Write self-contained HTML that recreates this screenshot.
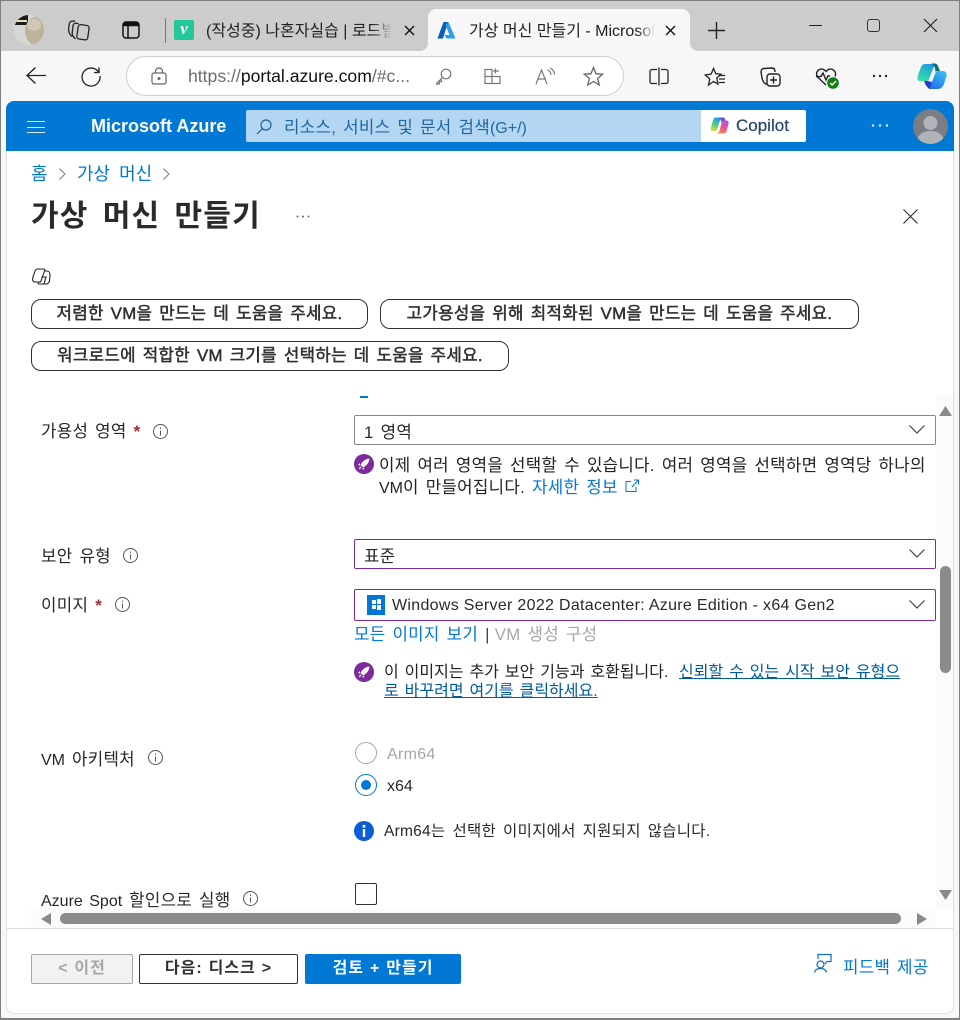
<!DOCTYPE html>
<html lang="ko"><head><meta charset="utf-8"><style>
*{box-sizing:border-box}
html,body{margin:0;padding:0;width:960px;height:1020px;overflow:hidden;background:#f7f7f7}
body{position:relative;font-family:"Liberation Sans","Noto Sans CJK KR",sans-serif;color:#292827;font-size:16px}
.a{position:absolute}
.t{position:absolute;white-space:nowrap;line-height:20px;font-size:16px}
.k{font-size:16.800px;letter-spacing:.3px;word-spacing:2px}
.n{letter-spacing:0;word-spacing:1.500px}
.l0{letter-spacing:0;font-size:16px}
.lnk{color:#0078d4}
.sel{position:absolute;left:354px;width:582px;border:1px solid #8a8886;border-radius:2px;background:#fff}
.pur{border-color:#7e2a9e}
.pill{position:absolute;height:30px;border:1px solid #323130;border-radius:10px;background:#fff;font-size:16.800px;line-height:27px;color:#323130;white-space:nowrap;text-align:center;letter-spacing:.3px;word-spacing:2px;-webkit-text-stroke:.5px #323130}
.btn{position:absolute;top:954px;height:30px;border-radius:2px;text-align:center;font-weight:700;font-size:16px;line-height:27px;white-space:nowrap;letter-spacing:1px;word-spacing:.5px}
svg{position:absolute;overflow:visible}
</style></head><body>
<div class="a" style="left:0;top:0;width:960px;height:51px;background:#cccccc"></div>
<div class="a" style="left:428px;top:9px;width:262px;height:42px;background:#f7f7f7;border-radius:8px 8px 0 0"></div>
<div class="a" style="left:420px;top:43px;width:8px;height:8px;background:#f7f7f7"></div>
<div class="a" style="left:420px;top:43px;width:8px;height:8px;background:#cccccc;border-radius:0 0 8px 0"></div>
<div class="a" style="left:690px;top:43px;width:8px;height:8px;background:#f7f7f7"></div>
<div class="a" style="left:690px;top:43px;width:8px;height:8px;background:#cccccc;border-radius:0 0 0 8px"></div>
<div class="a" style="left:6px;top:101px;width:948px;height:913px;background:#fff;border-radius:8px;border:1px solid #e1e1e1;border-top:0"></div>

<!-- avatar -->
<svg style="left:14px;top:15px" width="30" height="30" viewBox="0 0 30 30"><defs><clipPath id="c"><circle cx="15" cy="15" r="15"/></clipPath></defs><g clip-path="url(#c)"><rect width="30" height="30" fill="#d6d6d4"/><rect width="14" height="10" fill="#1a1a1a"/><rect y="5" width="13" height="2" fill="#e9e3b5"/><ellipse cx="22" cy="16" rx="11" ry="14" fill="#bdb29b"/><ellipse cx="20" cy="10" rx="7" ry="6" fill="#cfc8b4"/></g></svg>
<!-- workspaces -->
<svg style="left:68px;top:20px" width="22" height="22" fill="none" stroke="#222" stroke-width="1.300"><rect x="9.500" y="5" width="11" height="14.500" rx="2.500" transform="rotate(8 15 12)"/><path d="M10.500 3.800L8.500 3.300C6.500 3 5.300 4 5 6L4.200 12.500C4 15 5 17 7.500 18.800"/><path d="M7 1.300L5 1C3 1 1.700 2 1.200 4L.6 9C.5 12 2 15 4.200 16.500"/></svg>
<!-- tab panel -->
<svg style="left:122px;top:21px" width="18" height="18" fill="none" stroke="#111" stroke-width="1.500"><rect x="1" y="1" width="16" height="16" rx="3"/><path d="M1.500 4.500H16.500M6 5V16.500"/><rect x="1.500" y="1.500" width="15" height="3" fill="#111" stroke="none"/></svg>
<div class="a" style="left:165px;top:18px;width:1px;height:25px;background:#777"></div>
<!-- tab 1 -->
<div class="a" style="left:174px;top:20px;width:20px;height:20px;background:#20c997;border-radius:2px;color:#fff;font:italic 700 17px/18px 'Liberation Serif',serif;text-align:center">v</div>
<div class="t" style="left:206px;top:22px;width:186px;overflow:hidden;color:#222">(작성중) 나혼자실습 | 로드빌</div>
<div class="a" style="left:372px;top:18px;width:20px;height:24px;background:linear-gradient(90deg,rgba(204,204,204,0),#cccccc)"></div>
<svg style="left:404px;top:25px" width="11" height="11" stroke="#111" stroke-width="1.400"><path d="M1 1L10 10M10 1L1 10"/></svg>
<!-- tab 2 -->
<svg style="left:437px;top:21px" width="19" height="19" viewBox="0 0 19 19"><path d="M6.500 1H11L6 17.500H0.500Z" fill="#0a5fb4"/><path d="M11.500 1L18.500 17.500H9.500L7.500 14H12.500L8.500 4Z" fill="#2aa0ec"/></svg>
<div class="t" style="left:469px;top:22px;width:186px;overflow:hidden;color:#222">가상 머신 만들기 - Microsof</div>
<div class="a" style="left:637px;top:18px;width:18px;height:24px;background:linear-gradient(90deg,rgba(247,247,247,0),#f7f7f7)"></div>
<svg style="left:665px;top:25px" width="11" height="11" stroke="#111" stroke-width="1.400"><path d="M1 1L10 10M10 1L1 10"/></svg>
<svg style="left:708px;top:22px" width="17" height="17" stroke="#222" stroke-width="1.400"><path d="M0 8.500H17M8.500 0V17"/></svg>
<!-- window controls -->
<div class="a" style="left:809px;top:25px;width:13px;height:1px;background:#222"></div>
<div class="a" style="left:867px;top:19px;width:13px;height:13px;border:1.300px solid #333;border-radius:3px"></div>
<svg style="left:924px;top:19px" width="13" height="13" stroke="#222" stroke-width="1.200"><path d="M0 0L13 13M13 0L0 13"/></svg>

<!-- toolbar -->
<svg style="left:26px;top:66px" width="21" height="19" fill="none" stroke="#222" stroke-width="1.300"><path d="M20 9.500H1M9.500 1.500L1 9.500L9.500 17.500"/></svg>
<svg style="left:81px;top:65px" width="21" height="21" fill="none" stroke="#222" stroke-width="1.300"><path d="M18 2.500V7.500H13"/><path d="M17.500 7A9 9 0 1 0 19 11"/></svg>
<div class="a" style="left:126px;top:56px;width:498px;height:40px;background:#fff;border:1px solid #cfcfcf;border-radius:20px"></div>
<svg style="left:151px;top:67px" width="16" height="18" fill="none" stroke="#666" stroke-width="1.200"><rect x="1" y="6" width="14" height="11" rx="2"/><path d="M4.500 6V4.500a3.500 3.500 0 0 1 7 0V6"/><circle cx="8" cy="11.500" r=".9" fill="#666"/></svg>
<div class="t" style="left:188px;top:66px;font-size:17.600px;color:#6e6e6e;width:228px;overflow:hidden">https://<span style="color:#111">portal.azure.com</span>/#c...</div>
<svg style="left:435px;top:68px" width="17" height="17" fill="none" stroke="#777" stroke-width="1.200"><circle cx="11" cy="6" r="4.800"/><path d="M7.500 9.500L1.500 15.500V16H4.500V13.500H6.500V11.500"/></svg>
<svg style="left:484px;top:67px" width="19" height="19" fill="none" stroke="#777" stroke-width="1.200"><path d="M1 2.500H8V16.500H1ZM1 9.500H16V16.500H8M11.500 1.500V6.500M9 4H15"/></svg>
<svg style="left:535px;top:67px" width="20" height="18" fill="none" stroke="#777" stroke-width="1.200"><path d="M1 17L6.500 3L12 17M3 12H10M12.500 3C15 4 16 6 16 8M15 1C18 2.500 19.500 5 19.500 7.500"/></svg>
<svg style="left:583px;top:66px" width="21" height="20" fill="none" stroke="#666" stroke-width="1.300"><path d="M10.500 1.500L13 7.700L19.700 8.200L14.600 12.500L16.200 19L10.500 15.500L4.800 19L6.400 12.500L1.300 8.200L8 7.700Z"/></svg>
<svg style="left:649px;top:67px" width="20" height="19" fill="none" stroke="#222" stroke-width="1.300"><path d="M8 2.500H3a2 2 0 0 0-2 2v10a2 2 0 0 0 2 2h5M10 .5V18.500M12 2.500h5a2 2 0 0 1 2 2v10a2 2 0 0 1-2 2h-5"/></svg>
<svg style="left:704px;top:67px" width="22" height="20" fill="none" stroke="#222" stroke-width="1.300"><path d="M9.500 1.500L11.800 6.700L17 7.200L12.800 11L14 17L9.500 14.500L4.500 18L5.800 12L1.300 8L7.200 7Z"/><path d="M15 8.500H21M15 12H21M15 15.500H21"/></svg>
<svg style="left:760px;top:67px" width="21" height="21" fill="none" stroke="#222" stroke-width="1.400"><rect x="7" y="7" width="13" height="12" rx="3"/><path d="M13.500 9.500V16.500M10 13H17"/><path d="M15 5C15 2.500 14 1 12 1L4 1.500C2 1.500 1 3 1 5L2 11C2.500 14 4 16 6.500 17.500"/></svg>
<svg style="left:815px;top:67px" width="24" height="22" fill="none" stroke="#222" stroke-width="1.400"><path d="M11 18L3 10.500a5 5 0 0 1 0-7a5 5 0 0 1 7 0l1 1l1-1a5 5 0 0 1 7 0a5 5 0 0 1 1 6"/><path d="M1 9.500H6L8 6L11 13L13 9H15"/></svg>
<svg style="left:827px;top:77px" width="12" height="12"><circle cx="6" cy="6" r="5.800" fill="#107c10"/><path d="M3 6L5.200 8L9 4" stroke="#fff" stroke-width="1.400" fill="none"/></svg>
<svg style="left:872px;top:74px" width="16" height="4" fill="#222"><circle cx="2" cy="2" r="1.200"/><circle cx="8" cy="2" r="1.200"/><circle cx="14" cy="2" r="1.200"/></svg>
<svg style="left:917px;top:62px" width="30" height="28" viewBox="0 0 30 28"><defs><linearGradient id="g1" x1=".7" y1="0" x2=".2" y2="1"><stop offset="0" stop-color="#1b9de2"/><stop offset="1" stop-color="#3be0a0"/></linearGradient><linearGradient id="g2" x1=".8" y1="0" x2=".2" y2="1"><stop offset="0" stop-color="#3bc0f5"/><stop offset="1" stop-color="#1f6fe8"/></linearGradient></defs><path d="M8 2H18L12 17Q11.500 19 9 19H3C0 19 0 16 1 13L4 5Q5 2 8 2Z" fill="url(#g1)"/><path d="M21 9H26Q30 9 29.500 14L27 22Q25 27 21 27H12L15 20L18 12Q19 9 21 9Z" fill="url(#g2)"/><path d="M14 1.500H18Q20 1.500 21 4L23 9H20Q19 9 18.500 10L18 6Q17 3 14 1.500Z" fill="#106a84"/><path d="M7 19H11L15 20L12.500 27Q9 25 7 19Z" fill="#2340c8"/></svg>

<!-- azure header -->
<div class="a" style="left:6px;top:101px;width:948px;height:50px;background:#0078d4;border-radius:8px 8px 0 0"></div>
<div class="a" style="left:27px;top:121px;width:18px;height:12px;border-top:1.400px solid #d8eaf7;border-bottom:1.400px solid #d8eaf7"></div>
<div class="a" style="left:27px;top:126.500px;width:18px;height:1.400px;background:#d8eaf7"></div>
<div class="t" style="left:91px;top:116px;font-size:18px;font-weight:700;color:#fff">Microsoft Azure</div>
<div class="a" style="left:246px;top:110px;width:456px;height:32px;background:#b3d6f2;border-radius:2px 0 0 2px"></div>
<svg style="left:256px;top:119px" width="16" height="16" fill="none" stroke="#1e5f96" stroke-width="1.200"><circle cx="10" cy="6" r="5"/><path d="M6.500 9.500L1 15"/></svg>
<div class="t k" style="left:284px;top:118px;color:#1f66a3">리소스, 서비스 및 문서 검색<span class="l0">(G+/)</span></div>
<div class="a" style="left:701px;top:110px;width:105px;height:32px;background:#fff;border-radius:0 2px 2px 0"></div>
<svg style="left:710px;top:117px" width="19" height="17" viewBox="0 0 19 17"><defs><linearGradient id="g3" x1=".6" y1="0" x2=".3" y2="1"><stop offset="0" stop-color="#1f9ce8"/><stop offset=".6" stop-color="#5fd07a"/><stop offset="1" stop-color="#e8d840"/></linearGradient><linearGradient id="g4" x1=".8" y1="0" x2=".2" y2="1"><stop offset="0" stop-color="#a05cf0"/><stop offset=".5" stop-color="#ee4f9c"/><stop offset="1" stop-color="#f8a030"/></linearGradient></defs><path d="M5 .5H11L7 12.500Q6.500 14 5 14H2Q0 14 .8 11L3 3.500Q4 .5 5 .5Z" fill="url(#g3)"/><path d="M13.500 3.500H16.500Q19 3.500 18.500 7L16.500 14Q16 16.500 13 16.500H6.500Q8.500 16 9.500 13.500L11.500 6Q12 3.500 13.500 3.500Z" fill="url(#g4)"/><path d="M10 .5H13Q15 .5 15.500 3.500H13.500Q12 3.500 11.500 6Z" fill="#6a4fd8"/></svg>
<div class="t" style="left:736px;top:116px;font-size:17px;color:#26456a;-webkit-text-stroke:.2px #26456a">Copilot</div>
<svg style="left:871px;top:124px" width="18" height="3" fill="#e4f0fa"><circle cx="2" cy="1.500" r="1.200"/><circle cx="9" cy="1.500" r="1.200"/><circle cx="16" cy="1.500" r="1.200"/></svg>
<svg style="left:913px;top:109px" width="35" height="35" viewBox="0 0 35 35"><defs><clipPath id="c2"><circle cx="17.500" cy="17.500" r="17.500"/></clipPath></defs><g clip-path="url(#c2)"><rect width="35" height="35" fill="#7a7e84"/><circle cx="17.500" cy="14" r="7" fill="#b0b3b7"/><ellipse cx="17.500" cy="31" rx="13" ry="9" fill="#b0b3b7"/></g></svg>

<!-- breadcrumb / title -->
<div class="t" style="left:31px;top:164px;font-size:18px;color:#0078d4">홈</div>
<svg style="left:59px;top:168px" width="7" height="12" fill="none" stroke="#777" stroke-width="1"><path d="M.5 .5L6 6L.5 11.500"/></svg>
<div class="t" style="left:77px;top:164px;font-size:18px;color:#0078d4;word-spacing:4px">가상 머신</div>
<svg style="left:163px;top:168px" width="7" height="12" fill="none" stroke="#777" stroke-width="1"><path d="M.5 .5L6 6L.5 11.500"/></svg>
<div class="t" style="left:31px;top:200px;font-size:30px;line-height:34px;font-weight:700;color:#2a2a2a;letter-spacing:1.200px;word-spacing:4.600px">가상 머신 만들기</div>
<svg style="left:296px;top:215px" width="14" height="3" fill="#666"><circle cx="1.500" cy="1.500" r="1"/><circle cx="7" cy="1.500" r="1"/><circle cx="12.500" cy="1.500" r="1"/></svg>
<svg style="left:903px;top:209px" width="15" height="15" stroke="#333" stroke-width="1.200"><path d="M.5 .5L14.500 14.500M14.500 .5L.5 14.500"/></svg>

<!-- copilot outline -->
<svg style="left:32px;top:268px" width="19" height="17" fill="none" stroke="#222" stroke-width="1.100"><path d="M6 1H12C13 1 13 2 12.500 3L9 13C8.500 14 8 14 7 14H3C1 14 0 12 1 9L3 3C3.500 1.500 5 1 6 1Z"/><path d="M12 3H15C17 3 18 5 18 7L17.500 13C17 15 15.500 16 14 16H7C6 16 6 15 6.500 14"/><path d="M9.500 9H14L12 16"/></svg>
<!-- pills -->
<div class="pill" style="left:31px;top:299px;width:337px">저렴한 VM을 만드는 데 도움을 주세요.</div>
<div class="pill" style="left:380px;top:299px;width:479px">고가용성을 위해 최적화된 VM을 만드는 데 도움을 주세요.</div>
<div class="pill" style="left:31px;top:341px;width:478px">워크로드에 적합한 VM 크기를 선택하는 데 도움을 주세요.</div>
<div class="a" style="left:360px;top:396px;width:8px;height:1.500px;background:#0078d4"></div>

<!-- 가용성 영역 -->
<div class="t k" style="left:41px;top:422px">가용성 영역 <span style="color:#a4262c;font-weight:700">*</span></div>
<svg style="left:153px;top:424px" width="15" height="15" fill="none" stroke="#555"><circle cx="7.500" cy="7.500" r="7"/><path d="M7.500 6.500V11.500M7.500 3.500V5"/></svg>
<div class="sel" style="top:415px;height:30px"></div>
<div class="t k" style="left:364px;top:423px">1 영역</div>
<svg style="left:909px;top:425px" width="16" height="10" fill="none" stroke="#444" stroke-width="1.200"><path d="M.5 .5L8 8L15.500 .5"/></svg>
<svg style="left:354px;top:454px" width="20" height="20"><circle cx="10" cy="10" r="10" fill="#7e2a9e"/><path d="M15 4.500C11 5 8 8 6.500 11L9 13.500C12 12 15 9 15.500 5Z M6 9L4 11L6 11.500Z M10.500 14L9 16L8.500 14Z M6 12.500L4.500 15.500L7.500 14Z" fill="#fff"/></svg>
<div class="t k" style="left:379px;top:456px;color:#222">이제 여러 영역을 선택할 수 있습니다. 여러 영역을 선택하면 영역당 하나의</div>
<div class="t k" style="left:379px;top:478px;color:#222"><span class="l0">VM</span>이 만들어집니다. <span class="lnk">자세한 정보</span></div>
<svg style="left:625px;top:479px" width="14" height="14" fill="none" stroke="#0078d4"><path d="M6 2.500H1V12.500H11V8M7 8L13 1.500M9 1H13.500V5.500"/></svg>

<!-- 보안 유형 -->
<div class="t k" style="left:41px;top:547px">보안 유형</div>
<svg style="left:123px;top:548px" width="15" height="15" fill="none" stroke="#555"><circle cx="7.500" cy="7.500" r="7"/><path d="M7.500 6.500V11.500M7.500 3.500V5"/></svg>
<div class="sel pur" style="top:539px;height:30px"></div>
<div class="t k" style="left:364px;top:547px">표준</div>
<svg style="left:909px;top:549px" width="16" height="10" fill="none" stroke="#444" stroke-width="1.200"><path d="M.5 .5L8 8L15.500 .5"/></svg>

<!-- 이미지 -->
<div class="t k" style="left:41px;top:596px">이미지 <span style="color:#a4262c;font-weight:700">*</span></div>
<svg style="left:115px;top:597px" width="15" height="15" fill="none" stroke="#555"><circle cx="7.500" cy="7.500" r="7"/><path d="M7.500 6.500V11.500M7.500 3.500V5"/></svg>
<div class="sel pur" style="top:589px;height:32px"></div>
<div class="a" style="left:367px;top:595px;width:18px;height:20px;background:#0078d4"></div>
<div class="a" style="left:372px;top:600px;width:4px;height:4px;background:#fff"></div><div class="a" style="left:377px;top:599px;width:4px;height:5px;background:#fff"></div>
<div class="a" style="left:372px;top:605px;width:4px;height:4px;background:#fff"></div><div class="a" style="left:377px;top:605px;width:4px;height:5px;background:#fff"></div>
<div class="t" style="left:392px;top:596px;letter-spacing:.3px">Windows Server 2022 Datacenter: Azure Edition - x64 Gen2</div>
<svg style="left:909px;top:600px" width="16" height="10" fill="none" stroke="#444" stroke-width="1.200"><path d="M.5 .5L8 8L15.500 .5"/></svg>
<div class="t k" style="left:354px;top:625px"><span class="lnk">모든 이미지 보기</span> <span style="color:#444">|</span> <span style="color:#a6a6a6;margin-left:-2px">VM 생성 구성</span></div>
<svg style="left:354px;top:662px" width="20" height="20"><circle cx="10" cy="10" r="10" fill="#7e2a9e"/><path d="M15 4.500C11 5 8 8 6.500 11L9 13.500C12 12 15 9 15.500 5Z M6 9L4 11L6 11.500Z M10.500 14L9 16L8.500 14Z M6 12.500L4.500 15.500L7.500 14Z" fill="#fff"/></svg>
<div class="t n" style="left:384px;top:663px;color:#222">이 이미지는 추가 보안 기능과 호환됩니다.</div>
<div class="t n" style="left:679px;top:663px;color:#005a9e;text-decoration:underline">신뢰할 수 있는 시작 보안 유형으</div>
<div class="t n" style="left:384px;top:682px;color:#005a9e;text-decoration:underline">로 바꾸려면 여기를 클릭하세요.</div>

<!-- VM arch -->
<div class="t k" style="left:41px;top:750px"><span class="l0">VM</span> 아키텍처</div>
<svg style="left:148px;top:750px" width="15" height="15" fill="none" stroke="#555"><circle cx="7.500" cy="7.500" r="7"/><path d="M7.500 6.500V11.500M7.500 3.500V5"/></svg>
<svg style="left:355px;top:742px" width="22" height="22" fill="none" stroke="#a6a6a6"><circle cx="11" cy="11" r="10.500"/></svg>
<div class="t" style="left:387px;top:745px;color:#a6a6a6;letter-spacing:.3px">Arm64</div>
<svg style="left:355px;top:774px" width="22" height="22"><circle cx="11" cy="11" r="10.500" fill="none" stroke="#0078d4"/><circle cx="11" cy="11" r="5" fill="#0078d4"/></svg>
<div class="t" style="left:387px;top:777px">x64</div>
<svg style="left:354px;top:821px" width="20" height="20"><circle cx="10" cy="10" r="10" fill="#0b5ed7"/><rect x="8.800" y="8" width="2.400" height="8" fill="#fff"/><circle cx="10" cy="5.300" r="1.500" fill="#fff"/></svg>
<div class="t" style="left:384px;top:822px;font-size:15.500px;letter-spacing:.25px;word-spacing:2.500px">Arm64는 선택한 이미지에서 지원되지 않습니다.</div>

<!-- spot -->
<div class="t k" style="left:41px;top:891px"><span class="l0">Azure Spot</span> 할인으로 실행</div>
<svg style="left:243px;top:891px" width="15" height="15" fill="none" stroke="#555"><circle cx="7.500" cy="7.500" r="7"/><path d="M7.500 6.500V11.500M7.500 3.500V5"/></svg>
<div class="a" style="left:355px;top:883px;width:22px;height:22px;border:1px solid #323130;border-radius:2px;background:#fff"></div>

<!-- scrollbars -->
<div class="a" style="left:936px;top:395px;width:17px;height:514px;background:#fbfbfb"></div>
<svg style="left:939px;top:406px" width="13" height="10"><path d="M6.500 0L13 10H0Z" fill="#8a8a8a"/></svg>
<div class="a" style="left:940px;top:566px;width:11px;height:107px;background:#8b8b8b;border-radius:5.500px"></div>
<svg style="left:939px;top:890px" width="13" height="10"><path d="M6.500 10L13 0H0Z" fill="#8a8a8a"/></svg>
<div class="a" style="left:31px;top:909px;width:905px;height:19px;background:#fbfbfb"></div>
<svg style="left:41px;top:913px" width="10" height="12"><path d="M0 6L10 0V12Z" fill="#8a8a8a"/></svg>
<div class="a" style="left:60px;top:913px;width:841px;height:11px;background:#8b8b8b;border-radius:5.500px"></div>
<svg style="left:917px;top:913px" width="10" height="12"><path d="M10 6L0 0V12Z" fill="#8a8a8a"/></svg>
<div class="a" style="left:6px;top:928px;width:948px;height:1px;background:#dcdcdc"></div>

<!-- footer -->
<div class="btn" style="left:31px;width:102px;background:#f3f2f1;border:1px solid #a6a6a6;color:#a6a6a6">&lt; 이전</div>
<div class="btn" style="left:139px;width:159px;background:#fff;border:1px solid #323130;color:#323130">다음: 디스크 &gt;</div>
<div class="btn" style="left:305px;width:156px;background:#0078d4;color:#fff;line-height:29px">검토 + 만들기</div>
<svg style="left:814px;top:953px" width="19" height="20" fill="none" stroke="#0f6cbd" stroke-width="1.200"><circle cx="6.500" cy="11.500" r="3.500"/><path d="M.5 19.500C1 17 3 15.500 6.500 15.500S12 17 12.500 19.500M4 6V1.500H17V8.500H13L11 11"/></svg>
<div class="t k" style="left:843px;top:958px;color:#0078d4">피드백 제공</div>

<!-- window border -->
<div class="a" style="left:0;top:0;width:960px;height:1020px;border:1px solid #7f7f7f;border-bottom-width:2px;pointer-events:none"></div>
</body></html>
